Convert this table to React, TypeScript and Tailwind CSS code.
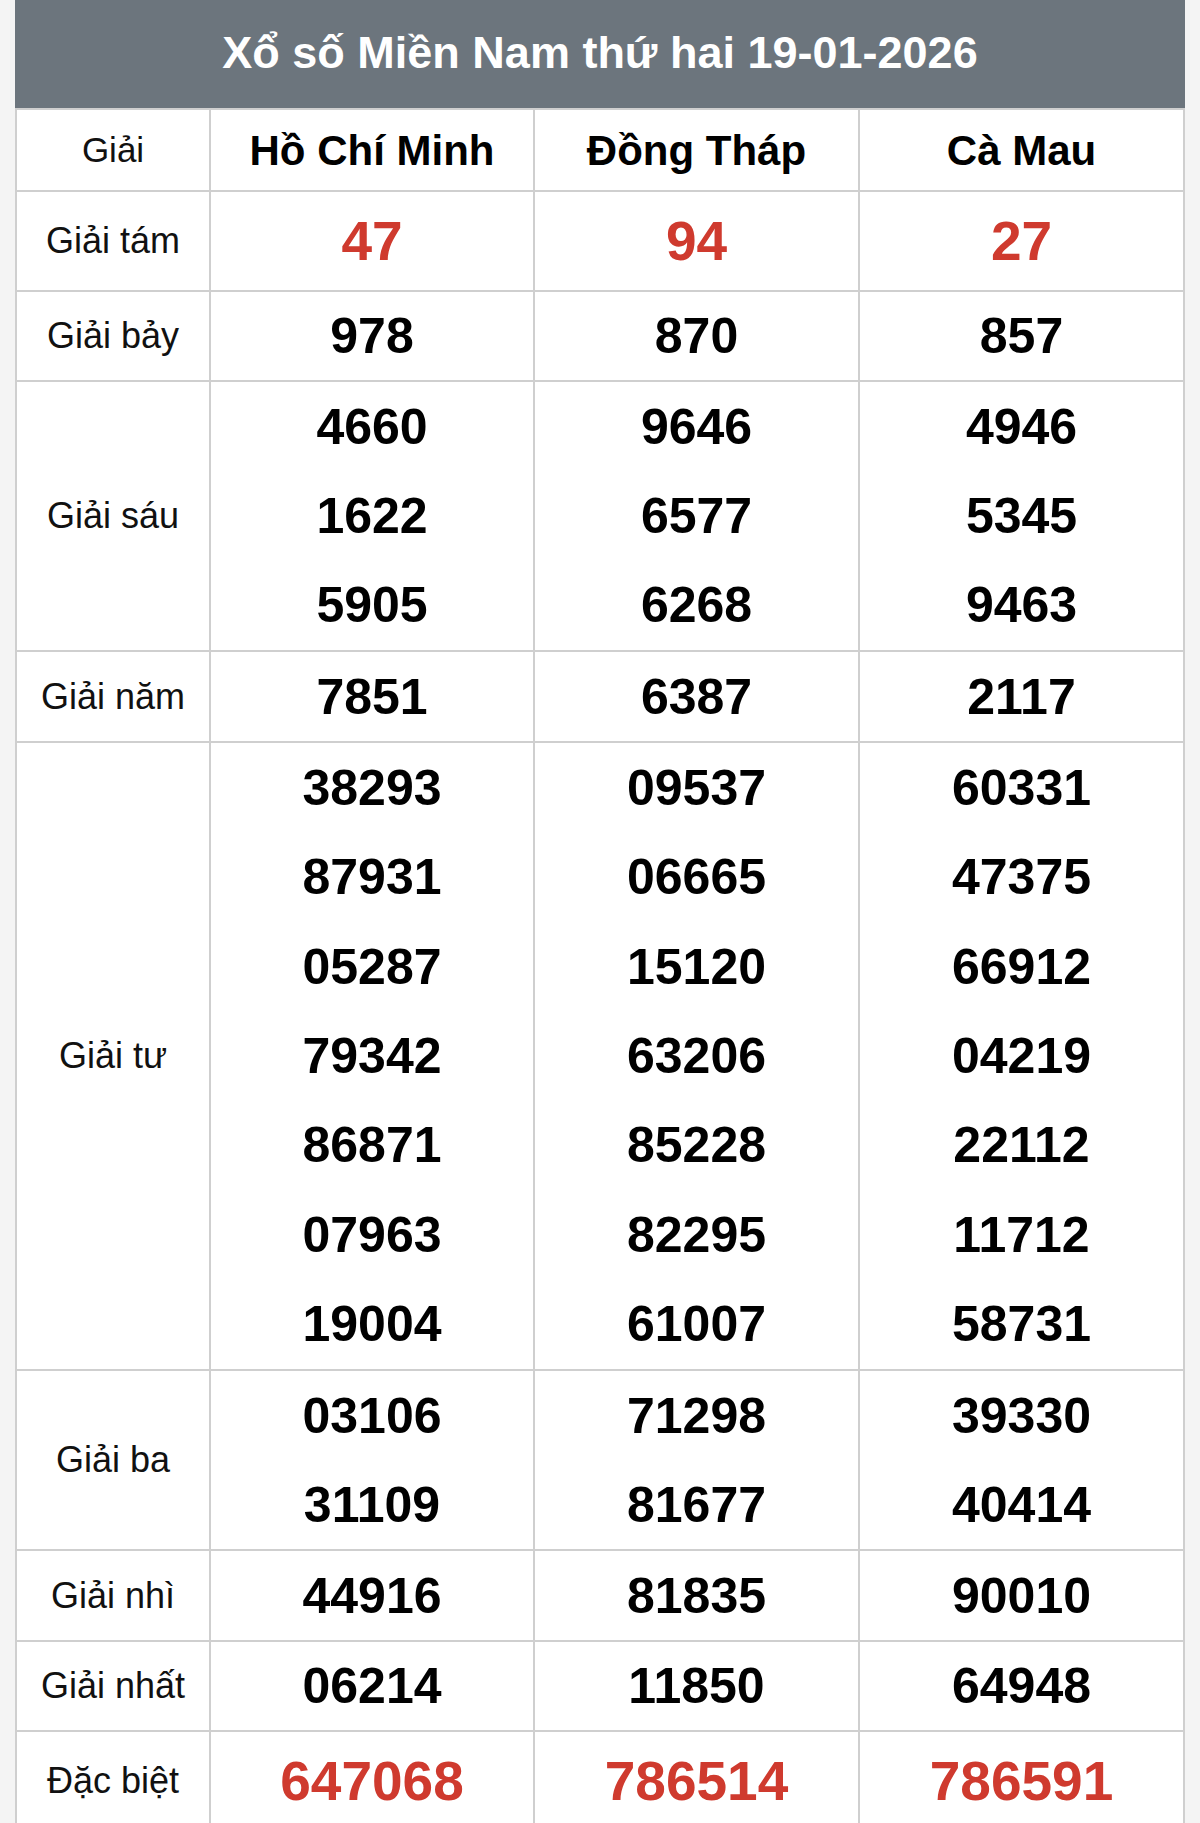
import React from "react";

type Row = { label: string; values: string[][]; red?: boolean; h: string };

const rows: Row[] = [
  { label: "Giải tám", values: [["47"], ["94"], ["27"]], red: true, h: "h-[98px]" },
  { label: "Giải bảy", values: [["978"], ["870"], ["857"]], h: "h-[88px]" },
  {
    label: "Giải sáu",
    values: [
      ["4660", "1622", "5905"],
      ["9646", "6577", "6268"],
      ["4946", "5345", "9463"],
    ],
    h: "h-[268px]",
  },
  { label: "Giải năm", values: [["7851"], ["6387"], ["2117"]], h: "h-[89px]" },
  {
    label: "Giải tư",
    values: [
      ["38293", "87931", "05287", "79342", "86871", "07963", "19004"],
      ["09537", "06665", "15120", "63206", "85228", "82295", "61007"],
      ["60331", "47375", "66912", "04219", "22112", "11712", "58731"],
    ],
    h: "h-[626px]",
  },
  {
    label: "Giải ba",
    values: [
      ["03106", "31109"],
      ["71298", "81677"],
      ["39330", "40414"],
    ],
    h: "h-[178px]",
  },
  { label: "Giải nhì", values: [["44916"], ["81835"], ["90010"]], h: "h-[89px]" },
  { label: "Giải nhất", values: [["06214"], ["11850"], ["64948"]], h: "h-[88px]" },
  { label: "Đặc biệt", values: [["647068"], ["786514"], ["786591"]], red: true, h: "h-[98px]" },
];

const cols = ["Hồ Chí Minh", "Đồng Tháp", "Cà Mau"];

export default function App() {
  return (
    <div
      className="h-[1823px] overflow-hidden bg-[#f4f4f4] px-[15px]"
      style={{ fontFamily: '"Liberation Sans", Arial, sans-serif' }}
    >
      <div className="w-[1170px]">
        <div className="flex h-[108px] items-center justify-center bg-[#6c757d] pb-[4px]">
          <h1 className="text-[45px] font-bold leading-none text-white">
            Xổ số Miền Nam thứ hai 19-01-2026
          </h1>
        </div>
        <div className="flex flex-col gap-[2px] bg-[#cfcfcf] p-[2px]">
          <div className="grid h-[80px] grid-cols-[192px_322px_323px_323px] gap-[2px]">
            <div className="flex items-center justify-center bg-white text-[35px] text-[#111]">Giải</div>
            {cols.map((c) => (
              <div key={c} className="flex items-center justify-center bg-white text-[42px] font-bold text-black">
                {c}
              </div>
            ))}
          </div>
          {rows.map((r) => (
            <div key={r.label} className={`grid grid-cols-[192px_322px_323px_323px] gap-[2px] ${r.h}`}>
              <div className="flex items-center justify-center bg-white text-[36px] text-[#111]">{r.label}</div>
              {r.values.map((vals, i) => (
                <div key={i} className="flex flex-col bg-white">
                  {vals.map((v, j) => (
                    <div
                      key={j}
                      className={
                        r.red
                          ? "flex flex-1 items-center justify-center text-[55px] font-bold leading-none text-[#cf3a2e]"
                          : "flex flex-1 items-center justify-center text-[50px] font-bold leading-none text-black"
                      }
                    >
                      {v}
                    </div>
                  ))}
                </div>
              ))}
            </div>
          ))}
        </div>
      </div>
    </div>
  );
}
